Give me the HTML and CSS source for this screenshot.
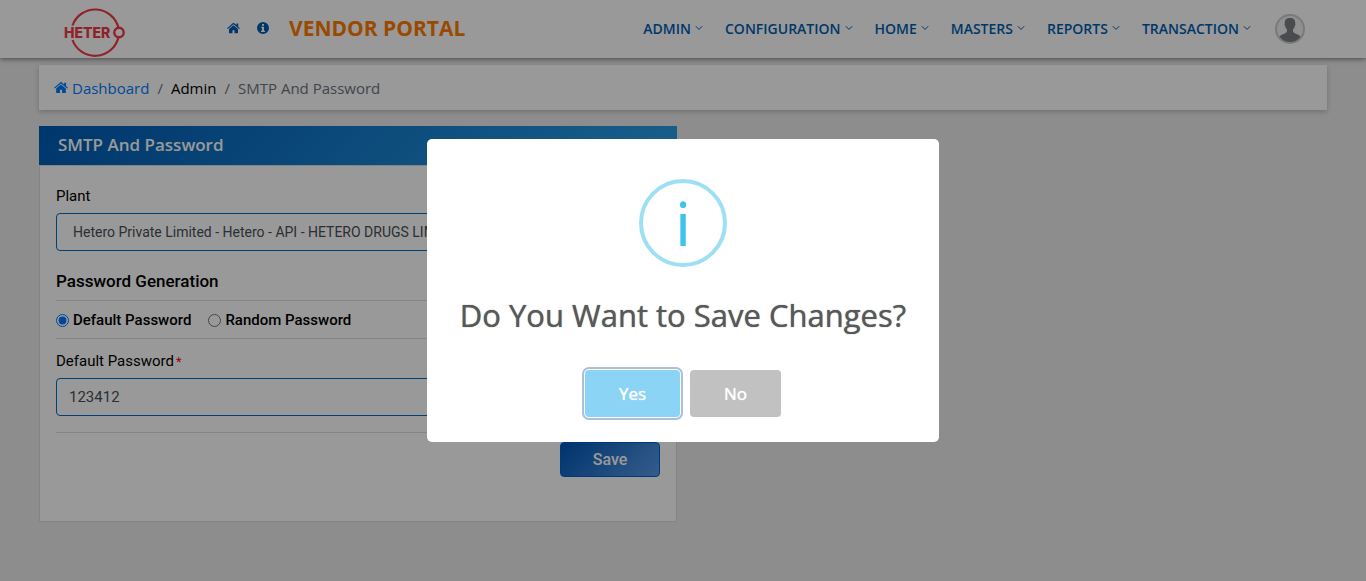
FILE: index.html
```html
<!DOCTYPE html>
<html lang="en">
<head>
<meta charset="utf-8">
<title>Vendor Portal</title>
<meta name="viewport" content="width=device-width, initial-scale=1">
<link rel="stylesheet" href="styles.css">
</head>
<body>
<svg class="sprite" aria-hidden="true">
  <symbol id="home" viewBox="0 0 13 12"><path d="M6.500 3.300 2 7v3.700c0 .3.200.5.500.5h3V8.200h2v3h3c.3 0 .5-.2.500-.5V7z"/><path d="m12.900 6.200-1.700-1.500V1.500H9.400v1.600L7.300 1.300c-.5-.4-1.100-.4-1.600 0L.1 6.200l.7.800 5.700-4.700L12.200 7z"/></symbol>
  <symbol id="info" viewBox="0 0 12 12"><path fill-rule="evenodd" d="M6 0a6 6 0 1 1 0 12A6 6 0 0 1 6 0zM5 2v1.700h2V2zM4 4.700v1h1v3H4v1.200h4V8.700H7v-4z"/></symbol>
  <symbol id="down" viewBox="0 0 8 6"><path d="m.8 1.200 3.200 3.200 3.200-3.200" fill="none" stroke="currentColor"/></symbol>
</svg>
<header class="topbar">
  <a class="logo" href="#" aria-label="Hetero">
    <svg width="62" height="52" viewBox="0 0 62 52">
      <path d="M8.500 18.500A24 24 0 0 1 54.500 21M8.500 33A24 24 0 0 0 54.500 30" fill="none" stroke="#ef3b46" stroke-width="2.200"/>
      <text class="logo-text" x="0" y="31">HETER</text>
      <circle cx="55" cy="25.500" r="4.700" fill="none" stroke="#ef3b46" stroke-width="2.400"/>
    </svg>
  </a>
  <div class="quick">
    <a href="#" aria-label="Home"><svg width="13" height="12"><use href="#home"/></svg></a>
    <a href="#" aria-label="Information"><svg width="12" height="12"><use href="#info"/></svg></a>
  </div>
  <h1 class="brand">VENDOR PORTAL</h1>
  <nav class="menu">
    <a href="#">ADMIN <svg class="caret"><use href="#down"/></svg></a>
    <a href="#">CONFIGURATION <svg class="caret"><use href="#down"/></svg></a>
    <a href="#">HOME <svg class="caret"><use href="#down"/></svg></a>
    <a href="#">MASTERS <svg class="caret"><use href="#down"/></svg></a>
    <a href="#">REPORTS <svg class="caret"><use href="#down"/></svg></a>
    <a href="#">TRANSACTION <svg class="caret"><use href="#down"/></svg></a>
  </nav>
  <button class="avatar" type="button" aria-label="Account">
    <svg width="30" height="30" viewBox="0 0 30 30">
      <circle cx="15" cy="15" r="14" fill="#f0f1f2" stroke="#c9cbcd" stroke-width="2"/>
      <path fill="#7b7e82" d="M15 4c3.700 0 5.400 1.900 5.200 5.200.5.500.3 2.200-.4 2.800-.3 1.900-1.300 3-1.800 3.600v2c1 2.300 5.600 2.400 7.500 5.200A13 13 0 0 1 15 28a13 13 0 0 1-10.500-5.200c1.900-2.800 6.500-2.900 7.500-5.200v-2c-.5-.6-1.500-1.700-1.800-3.600-.7-.6-.9-2.300-.4-2.800C9.600 5.900 11.300 4 15 4z"/>
    </svg>
  </button>
</header>
<main class="page">
  <nav class="crumbs" aria-label="Breadcrumb">
    <a class="crumb-home" href="#"><svg width="14" height="13"><use href="#home"/></svg>Dashboard</a>
    <span class="sep">/</span>
    <a class="crumb-section" href="#">Admin</a>
    <span class="sep">/</span>
    <span>SMTP And Password</span>
  </nav>
  <div class="columns">
    <section class="card">
      <h2 class="card-title">SMTP And Password</h2>
      <form class="form">
        <label class="label" for="plant">Plant</label>
        <select class="field plant" id="plant"><option>Hetero Private Limited - Hetero - API - HETERO DRUGS LIMITED</option></select>
        <h3 class="subhead">Password Generation</h3>
        <div class="radios">
          <label class="radio"><input type="radio" name="mode" checked>Default Password</label>
          <label class="radio"><input type="radio" name="mode">Random Password</label>
        </div>
        <label class="label" for="password">Default Password<span class="required">*</span></label>
        <input class="field" id="password" type="text" value="123412">
        <div class="actions"><button class="save" type="button">Save</button></div>
      </form>
    </section>
  </div>
</main>
<div class="overlay">
  <div class="dialog" role="dialog" aria-modal="true" aria-labelledby="question">
    <div class="dialog-icon">i</div>
    <h2 class="dialog-title" id="question">Do You Want to Save Changes?</h2>
    <div class="dialog-actions">
      <button class="choice yes" type="button">Yes</button>
      <button class="choice no" type="button">No</button>
    </div>
  </div>
</div>
</body>
</html>
```
FILE: styles.css
```css
* { box-sizing: border-box; }
body {
  margin: 0;
  min-height: 100vh;
  background: #ebebeb;
  color: #000;
  font-family: "Open Sans", sans-serif;
  font-size: 15px;
}
a { color: inherit; text-decoration: none; }
h1, h2, h3 { margin: 0; }
svg { display: block; fill: currentColor; }
button { font-family: inherit; cursor: pointer; }
.sprite { position: absolute; width: 0; height: 0; }

.topbar {
  display: flex;
  align-items: center;
  height: 58px;
  padding: 0 61px 2px 64px;
  background: #fff;
  color: #005daf;
  box-shadow: 0 1px 5px rgba(0, 0, 0, .5);
}
.logo { padding-top: 10px; }
.logo-text { font: 800 14px Inter, sans-serif; fill: #ef3b46; }
.quick { display: flex; align-items: center; gap: 17px; margin-left: 101px; }
.brand { margin-left: 20px; color: #ff7c00; font-size: 21px; font-weight: 700; }
.menu { display: flex; gap: 22px; margin-left: auto; font-size: 14px; font-weight: 600; }
.menu a { display: flex; align-items: center; gap: 4px; }
.caret { width: 8px; height: 6px; }
.avatar { margin: 2px 0 0 24px; padding: 0; border: 0; background: none; }

.page { padding: 7px 39px 0; }
.crumbs {
  display: flex;
  align-items: center;
  gap: 8px;
  height: 45px;
  padding: 0 15px;
  background: #fff;
  color: #6c757d;
  line-height: 18px;
  box-shadow: 0 2px 5px rgba(0, 0, 0, .2);
}
.crumb-home { display: flex; align-items: center; gap: 4px; color: #007bff; }
.crumb-section { color: #000; }

.columns { display: grid; grid-template-columns: 1fr 1fr; gap: 12px; margin-top: 16px; }
.card { font-family: Roboto, sans-serif; }
.card-title {
  padding: 0 19px 1px;
  background: linear-gradient(135deg, #005bb5, #2aa0e6);
  color: #fff;
  font: 600 17px/38px "Open Sans", sans-serif;
}
.form {
  display: flex;
  flex-direction: column;
  padding: 20px 16px 44px;
  border: 1px solid #dcdcdc;
  background: #fff;
}
.label { font-size: 15px; line-height: 20px; }
.required { margin-left: 2px; color: #f00; font-size: 13px; }
.field {
  width: 100%;
  height: 38px;
  margin-top: 7px;
  padding: 0 12px 1px;
  border: 1px solid #0069c8;
  border-radius: 4px;
  background: #fff;
  color: #495057;
  font: 15px Roboto, sans-serif;
}
.plant { padding: 0 16px 1px; appearance: none; font-size: 14px; }
.subhead { margin-top: 19px; padding-bottom: 8px; border-bottom: 1px solid #dedede; font-size: 17px; font-weight: 500; line-height: 22px; }
.radios { display: flex; gap: 17px; margin-bottom: 12px; padding: 9px 0 8px; border-bottom: 1px solid #dedede; }
.radio { display: flex; align-items: center; gap: 4px; font-size: 15px; font-weight: 500; line-height: 20px; }
.radio input { width: 13px; height: 13px; margin: 0; accent-color: #0075ff; }
.radios + .label { margin-bottom: -1px; }
.actions { display: flex; justify-content: flex-end; margin-top: 16px; padding-top: 9px; border-top: 1px solid #dedede; }
.save {
  width: 100px;
  height: 35px;
  border: 1px solid #0062cc;
  border-radius: 4px;
  background: linear-gradient(135deg, #0056b8, #599be8);
  color: #fff;
  font-size: 16px;
  font-weight: 500;
}

.overlay {
  position: fixed;
  inset: 0;
  display: flex;
  align-items: center;
  justify-content: center;
  background: rgba(0, 0, 0, .4);
}
.dialog {
  display: flex;
  flex-direction: column;
  align-items: center;
  width: 512px;
  max-width: 96%;
  padding: 40px 16px 25px;
  border-radius: 5px;
  background: #fff;
}
.dialog-icon {
  width: 88px;
  height: 88px;
  border: 4px solid #9de0f6;
  border-radius: 50%;
  color: #3fc3ee;
  font-size: 60px;
  line-height: 80px;
  text-align: center;
  text-shadow: 0 0 1px #3fc3ee;
}
.dialog-title { margin-top: 26px; color: #595959; font-size: 31px; font-weight: 500; line-height: 44px; text-shadow: 0 0 1px #595959; }
.dialog-actions { display: flex; gap: 10px; margin-top: 33px; }
.choice { height: 47px; padding: 0 34px; border: 0; border-radius: 4px; color: #fff; font-size: 17px; font-weight: 500; text-shadow: 0 0 1px #fff; }
.yes { background: #8cd4f5; box-shadow: 0 0 0 1px #fff, 0 0 0 3px #a9c0d8; }
.no { background: #c1c1c1; }
```
